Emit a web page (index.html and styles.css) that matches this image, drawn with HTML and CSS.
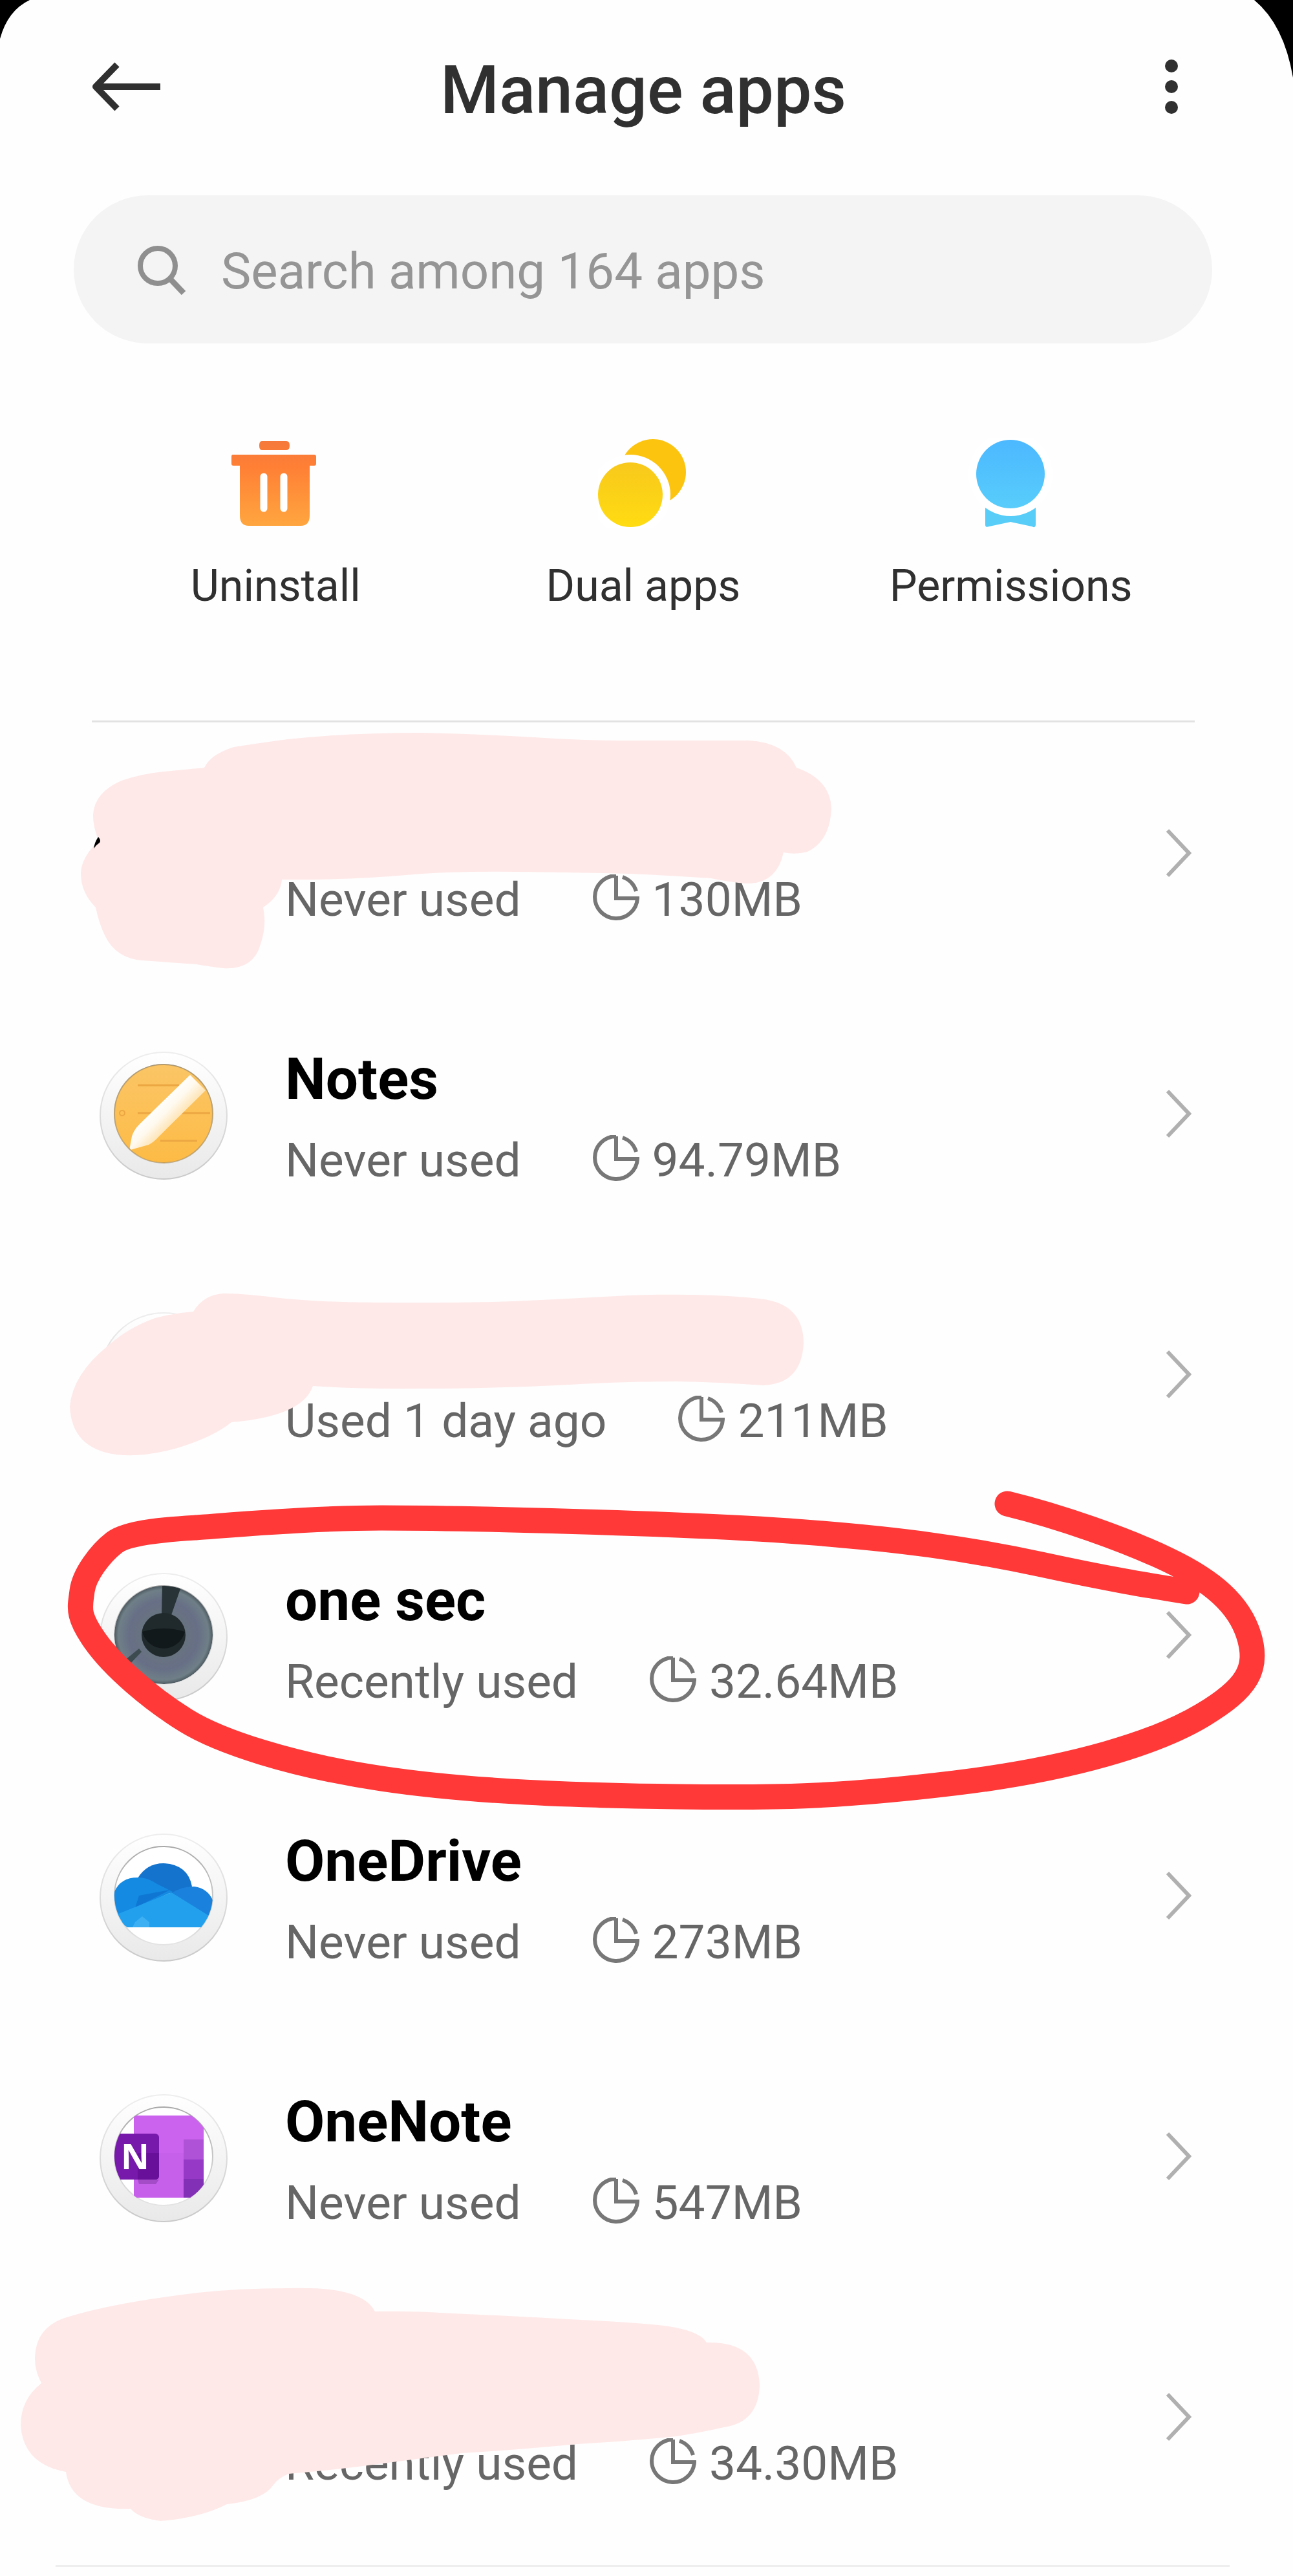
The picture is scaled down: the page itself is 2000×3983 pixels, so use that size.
FILE: index.html
```html
<!DOCTYPE html>
<html lang="en">
	<head>
		<meta charset="utf-8">
		<title>Manage apps</title>
		<link rel="stylesheet" href="styles.css">
	</head>
	<body>
		<!-- shared icons -->
		<svg class="defs" aria-hidden="true">
			<defs>
				<linearGradient id="ringFill" x1="0" y1="0" x2="0" y2="1">
					<stop offset="0" stop-color="#fff" />
					<stop offset="1" stop-color="#e9e9ea" />
				</linearGradient>
				<linearGradient id="ringLine" x1="0" y1="0" x2="0" y2="1">
					<stop offset="0" stop-color="#eee" />
					<stop offset="1" stop-color="#c9c9c9" />
				</linearGradient>
				<linearGradient id="innerLine" x1="0" y1="0" x2="0" y2="1">
					<stop offset="0" stop-color="#a8a8a8" />
					<stop offset="1" stop-color="#e4e4e4" />
				</linearGradient>
				<linearGradient id="trash" x1="0" y1="0" x2="0" y2="1">
					<stop offset="0" stop-color="#f5793b" />
					<stop offset="0.3" stop-color="#ff7f35" />
					<stop offset="1" stop-color="#ffa63f" />
				</linearGradient>
				<linearGradient id="coin" x1="0" y1="0" x2="0" y2="1">
					<stop offset="0" stop-color="#f8c81c" />
					<stop offset="1" stop-color="#ffdc12" />
				</linearGradient>
				<linearGradient id="sky" x1="0" y1="0" x2="0" y2="1">
					<stop offset="0" stop-color="#4cb8ff" />
					<stop offset="1" stop-color="#58cdfb" />
				</linearGradient>
				<linearGradient id="paper" x1="0" y1="0" x2="0" y2="1">
					<stop offset="0" stop-color="#fbc566" />
					<stop offset="1" stop-color="#fdbb45" />
				</linearGradient>
				<linearGradient id="pen" gradientUnits="userSpaceOnUse" x1="90" y1="80" x2="120" y2="110">
					<stop offset="0" stop-color="#fff" />
					<stop offset="0.45" stop-color="#fffaf0" />
					<stop offset="1" stop-color="#fde2ae" />
				</linearGradient>
				<radialGradient id="iris">
					<stop offset="0.4" stop-color="#68747f" />
					<stop offset="0.7" stop-color="#676f86" />
					<stop offset="0.92" stop-color="#6f7f87" />
					<stop offset="1" stop-color="#4d5960" />
				</radialGradient>
				<clipPath id="inner"><circle cx="100" cy="97" r="76" /></clipPath>
				<symbol id="ring" viewBox="0 0 200 200">
					<circle cx="100" cy="100" r="98" fill="url(#ringFill)" stroke="url(#ringLine)" stroke-width="2" />
					<circle cx="100" cy="97" r="76" fill="#fff" stroke="url(#innerLine)" stroke-width="2" />
				</symbol>
				<symbol id="pie" viewBox="0 0 72 72">
					<path d="M36 2A33 33 0 1 0 69 37H36V2M46 4A33 33 0 0 1 67 26" fill="none" stroke="#777" stroke-width="6" />
				</symbol>
				<symbol id="chevron" viewBox="0 0 40 76">
					<path d="M3 3L36 38L3 73" fill="none" stroke="#b0b0b0" stroke-width="6" />
				</symbol>
			</defs>
		</svg>

		<main class="screen">
			<header class="header">
				<button class="icon-button" aria-label="Back">
					<svg width="108" height="76" viewBox="0 0 108 76">
						<path d="M39 4L6 38L39 72M6 38H106" fill="none" stroke="#303030" stroke-width="10" stroke-linejoin="round" />
					</svg>
				</button>
				<h1>Manage apps</h1>
				<button class="icon-button menu" aria-label="More options">
					<svg width="20" height="84" viewBox="0 0 20 84">
						<g fill="#303030">
							<circle cx="10" cy="10" r="10" />
							<circle cx="10" cy="42" r="10" />
							<circle cx="10" cy="74" r="10" />
						</g>
					</svg>
				</button>
			</header>

			<label class="search">
				<svg width="76" height="78" viewBox="0 0 76 78">
					<circle cx="32" cy="33" r="27" fill="none" stroke="#8f8f8f" stroke-width="8" />
					<path d="M51 53L72 75" stroke="#8f8f8f" stroke-width="9" />
				</svg>
				<input type="text" placeholder="Search among 164 apps" aria-label="Search apps">
			</label>

			<nav class="actions">
				<button class="action">
					<svg width="140" height="140" viewBox="3 0 140 140">
						<path fill="url(#trash)" d="M52 5H90Q95 5 95 12Q95 19 90 19H52Q48 19 48 12Q48 5 52 5ZM7 26H133Q136 26 136 29V40Q136 43 133 43H126V120Q126 136 112 136H32Q18 136 18 120V43H8Q5 43 5 40V29Q5 26 7 26Z" />
						<path d="M55 60V109M86 60V109" stroke="#fff" stroke-width="11" stroke-linecap="round" />
					</svg>
					Uninstall
				</button>
				<button class="action">
					<svg width="140" height="140" viewBox="3 0 140 140">
						<circle cx="88" cy="53" r="51" fill="#fcc40f" />
						<circle cx="53" cy="88" r="62" fill="#fff" />
						<circle cx="53" cy="88" r="50" fill="url(#coin)" />
					</svg>
					Dual apps
				</button>
				<button class="action">
					<svg width="140" height="140" viewBox="-3 0 140 140">
						<path d="M27 100H105V135Q104 140 99 137L66 130L33 137Q27 139 27 135Z" fill="#58cdf8" />
						<circle cx="66" cy="56" r="65" fill="#fff" />
						<circle cx="66" cy="56" r="53" fill="url(#sky)" />
					</svg>
					Permissions
				</button>
			</nav>

			<ul class="app-list">
				<li>
					<a class="app" href="#">
						<span class="app-icon"></span>
						<div class="app-text">
							<div class="app-name"></div>
							<div class="app-info">
								<span>Never used</span>
								<svg class="pie"><use href="#pie" /></svg>
								<span>130MB</span>
							</div>
						</div>
						<svg class="chevron"><use href="#chevron" /></svg>
					</a>
				</li>
				<li>
					<a class="app" href="#">
						<svg class="app-icon" viewBox="0 0 200 200">
							<use href="#ring" />
							<g clip-path="url(#inner)">
								<circle cx="100" cy="97" r="76" fill="url(#paper)" />
								<path d="M60 53H124M60 96H172M95 139H152" stroke="#eca743" stroke-width="3" />
								<circle cx="36" cy="96" r="4" fill="none" stroke="#eca743" stroke-width="2" />
								<path d="M141 37L165 61L93 132Q85 141 77 145L52 152Q47 154 48 148L51 132Q54 122 63 113Z" fill="url(#pen)" />
							</g>
							<circle cx="100" cy="97" r="76" fill="none" stroke="#a98c58" stroke-width="2" opacity="0.6" />
						</svg>
						<div class="app-text">
							<div class="app-name">Notes</div>
							<div class="app-info">
								<span>Never used</span>
								<svg class="pie"><use href="#pie" /></svg>
								<span>94.79MB</span>
							</div>
						</div>
						<svg class="chevron"><use href="#chevron" /></svg>
					</a>
				</li>
				<li>
					<a class="app" href="#">
						<svg class="app-icon" viewBox="0 0 200 200"><use href="#ring" /></svg>
						<div class="app-text">
							<div class="app-name"></div>
							<div class="app-info">
								<span>Used 1 day ago</span>
								<svg class="pie"><use href="#pie" /></svg>
								<span>211MB</span>
							</div>
						</div>
						<svg class="chevron"><use href="#chevron" /></svg>
					</a>
				</li>
				<li>
					<a class="app" href="#">
						<svg class="app-icon" viewBox="0 0 200 200">
							<use href="#ring" />
							<g clip-path="url(#inner)">
								<circle cx="100" cy="97" r="76" fill="url(#iris)" />
								<path d="M98 18L128 20L112 66H97Z" fill="#273337" />
								<path d="M40 136L62 118L66 123L48 142Z" fill="#3c4b50" />
								<circle cx="100" cy="97" r="34" fill="#20292c" />
								<path d="M67 92Q100 82 133 92A34 34 0 0 1 67 92Z" fill="#12191b" />
							</g>
						</svg>
						<div class="app-text">
							<div class="app-name">one sec</div>
							<div class="app-info">
								<span>Recently used</span>
								<svg class="pie"><use href="#pie" /></svg>
								<span>32.64MB</span>
							</div>
						</div>
						<svg class="chevron"><use href="#chevron" /></svg>
					</a>
				</li>
				<li>
					<a class="app" href="#">
						<svg class="app-icon" viewBox="0 0 200 200">
							<use href="#ring" />
							<g clip-path="url(#inner)">
								<path d="M60 70Q74 47 100 47Q138 49 144 83L114 94L60 76Z" fill="#1473cd" />
								<path d="M20 146V105Q26 69 60 69Q74 68 90 79L114 91L36 126Z" fill="#148ae3" />
								<path d="M56 116L110 88L62 97Z" fill="#0f76d3" />
								<path d="M112 93Q130 82 148 83Q172 87 178 110V140Z" fill="#1a82dc" />
								<path d="M28 126L112 92L170 128L160 146H44Q34 140 28 126Z" fill="#22a0ed" />
								<path d="M56 138L67 129L78 138V146H52Z" fill="#3db0f3" />
							</g>
						</svg>
						<div class="app-text">
							<div class="app-name">OneDrive</div>
							<div class="app-info">
								<span>Never used</span>
								<svg class="pie"><use href="#pie" /></svg>
								<span>273MB</span>
							</div>
						</div>
						<svg class="chevron"><use href="#chevron" /></svg>
					</a>
				</li>
				<li>
					<a class="app" href="#">
						<svg class="app-icon" viewBox="0 0 200 200">
							<use href="#ring" />
							<g clip-path="url(#inner)">
								<path d="M54 34H162V161H54Z" fill="#cb63ee" />
								<path d="M54 92H131V161H54Z" fill="#c65fea" />
								<path d="M131 71H162V102H131Z" fill="#af52d8" />
								<path d="M131 102H162V132H131Z" fill="#9539c6" />
								<path d="M131 132H162V161H131Z" fill="#8230b6" />
								<path d="M60 133H93L88 140H62Z" fill="#a44bc8" />
								<rect x="16" y="62" width="77" height="71" rx="6" fill="#7719ab" />
								<path d="M60 92H93V127Q93 133 87 133H60Z" fill="#68109a" />
								<text class="badge-letter" x="56" y="117" text-anchor="middle">N</text>
							</g>
						</svg>
						<div class="app-text">
							<div class="app-name">OneNote</div>
							<div class="app-info">
								<span>Never used</span>
								<svg class="pie"><use href="#pie" /></svg>
								<span>547MB</span>
							</div>
						</div>
						<svg class="chevron"><use href="#chevron" /></svg>
					</a>
				</li>
				<li>
					<a class="app" href="#">
						<span class="app-icon"></span>
						<div class="app-text">
							<div class="app-name"></div>
							<div class="app-info">
								<span>Recently used</span>
								<svg class="pie"><use href="#pie" /></svg>
								<span>34.30MB</span>
							</div>
						</div>
						<svg class="chevron"><use href="#chevron" /></svg>
					</a>
				</li>
			</ul>
			<hr class="end-line">

			<!-- marker strokes drawn over the list -->
			<svg class="marks" viewBox="0 0 2000 3983" preserveAspectRatio="none" aria-hidden="true">
				<path d="M0 0H46Q12 16 0 60ZM2000 0H1940Q1986 38 2000 120Z" />
				<g fill="#fee9e8">
					<path d="M316 1187Q326 1166 362 1155Q400 1149 445 1143Q540 1133 652 1133Q740 1135 826 1140Q910 1146 992 1145H1158Q1215 1148 1232 1187Q1284 1205 1286 1250Q1284 1300 1249 1317Q1230 1322 1212 1318Q1202 1364 1160 1366Q1140 1366 1100 1358Q1040 1354 975 1351Q890 1349 801 1348Q700 1347 640 1352Q540 1361 436 1360Q434 1385 407 1403Q413 1430 403 1460Q392 1500 345 1497Q320 1494 304 1491L220 1485Q180 1482 163 1448Q153 1428 148 1403Q125 1380 125 1350Q126 1325 153 1300Q144 1280 144 1260Q146 1225 188 1207Q220 1196 254 1193Q285 1190 316 1187Z" />
					<path d="M299 2028Q315 2002 345 2000Q370 1999 442 2008Q510 2014 585 2014Q700 2015 796 2012Q880 2008 972 2003Q1020 2001 1073 2002Q1130 2003 1175 2008Q1243 2015 1243 2077Q1240 2140 1180 2142Q1110 2137 1048 2136Q960 2136 880 2141Q760 2147 652 2147Q560 2148 484 2143Q468 2190 358 2199Q330 2222 274 2239Q220 2254 180 2249Q111 2240 108 2175Q112 2125 168 2080Q200 2052 240 2038Q270 2030 299 2028Z" />
					<path d="M306 3545Q370 3538 446 3538Q560 3534 580 3574Q640 3573 701 3577Q790 3581 880 3586Q950 3589 1008 3594Q1080 3600 1093 3622Q1172 3620 1175 3687Q1174 3745 1120 3753Q1080 3762 1046 3767Q970 3775 893 3779Q800 3788 714 3793Q630 3804 561 3813Q500 3821 446 3825Q430 3832 423 3842Q407 3866 351 3872Q310 3893 249 3898Q215 3894 202 3879Q110 3882 102 3822Q36 3810 32 3750Q32 3710 64 3685Q54 3665 54 3648Q54 3595 110 3581Q180 3560 306 3545Z" />
				</g>
				<path d="M152 1294Q157 1300 154 1303Q149 1306 145 1312Q146 1303 152 1294Z" />
				<path class="loop" d="M1558 2325C1640 2345 1740 2380 1807 2412S1917 2480 1932 2530S1930 2610 1860 2652S1660 2735 1476 2757S1200 2780 1047 2778S730 2771 590 2750S340 2693 287 2660S176 2578 147 2537S124 2485 127 2460S155 2402 177 2385S270 2364 303 2362S470 2347 590 2347S1050 2355 1219 2367S1500 2395 1611 2419S1780 2452 1836 2461" />
			</svg>
		</main>
	</body>
</html>
```

FILE: styles.css
```css
* {
	box-sizing: border-box;
}

body {
	margin: 0;
	background-color: #fefefe;
	color: #303030;
	font-family: Roboto, sans-serif;
}

button {
	padding: 0;
	border: none;
	background: none;
	color: inherit;
	font: inherit;
	cursor: pointer;
}

svg {
	display: block;
	flex: none;
}

.defs {
	position: absolute;
	width: 0;
	height: 0;
}

.screen {
	position: relative;
	padding-bottom: 14px;
}

.header {
	display: grid;
	grid-template-columns: 108px 1fr 108px;
	align-items: center;
	height: 268px;
	padding: 0 134px 0 142px;
}

.header h1 {
	margin: 0;
	padding: 12px 18px 0 0;
	font-size: 104px;
	font-weight: 500;
	line-height: 120px;
	text-align: center;
}

.menu {
	justify-self: center;
}

.search {
	display: flex;
	align-items: center;
	gap: 54px;
	height: 229px;
	margin: 34px 125px 0 114px;
	padding: 0 98px;
	border-radius: 115px;
	background-color: #f4f4f4;
}

.search input {
	flex: 1;
	min-width: 0;
	padding: 6px 0 0;
	border: none;
	outline: none;
	background: none;
	color: #303030;
	font: 78px Roboto, sans-serif;
}

.search input::placeholder {
	color: #959595;
	opacity: 1;
}

.actions {
	display: grid;
	grid-template-columns: repeat(3, 1fr);
	margin: 0 152px 0 142px;
	padding: 146px 0 168px;
	border-bottom: 3px solid #e2e2e2;
}

.action {
	display: flex;
	flex-direction: column;
	align-items: center;
	gap: 49px;
	font-size: 68px;
	line-height: 80px;
}

.app-list {
	margin: 0;
	padding: 0;
	list-style: none;
}

.app {
	display: flex;
	align-items: center;
	height: 403px;
	padding: 0 157px 0 153px;
	color: #666;
	text-decoration: none;
}

.app-icon {
	width: 200px;
	height: 200px;
	margin-top: 6px;
}

.app-text {
	flex: 1;
	padding: 20px 0 0 88px;
}

.app-name {
	height: 100px;
	margin-bottom: 24px;
	color: #000;
	font-size: 89px;
	font-weight: 700;
	line-height: 98px;
}

.app-info {
	display: flex;
	align-items: center;
	font-size: 73px;
	line-height: 100px;
}

.pie {
	width: 72px;
	height: 72px;
	margin: 0 20px 6px 111px;
}

.chevron {
	width: 40px;
	height: 76px;
}

.badge-letter {
	fill: #fff;
	font: 700 54px "Open Sans", sans-serif;
}

.end-line {
	height: 3px;
	margin: 28px 98px 0 86px;
	border: none;
	background-color: #eee;
}

.marks {
	position: absolute;
	top: 0;
	left: 0;
	width: 100%;
	height: 100%;
	pointer-events: none;
}

.loop {
	fill: none;
	stroke: #ff3838;
	stroke-width: 39px;
	stroke-linecap: round;
	stroke-linejoin: round;
}
```
